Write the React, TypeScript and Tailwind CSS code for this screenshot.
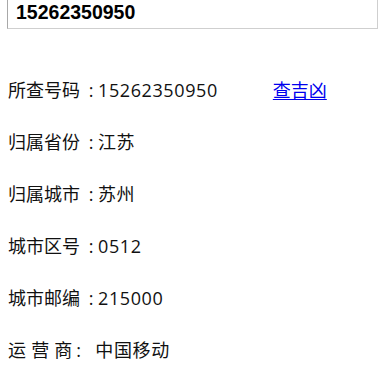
const rows: { label: string; value: string; link?: string; gap?: boolean }[] = [
  { label: "所查号码", value: "15262350950", link: "查吉凶" },
  { label: "归属省份", value: "江苏" },
  { label: "归属城市", value: "苏州" },
  { label: "城市区号", value: "0512" },
  { label: "城市邮编", value: "215000" },
  { label: "运 营 商", value: "中国移动", gap: true },
];

export default function App() {
  return (
    <div className="h-[381px] w-[379px] overflow-hidden bg-white font-['Open_Sans','Noto_Sans_CJK_SC',sans-serif] text-[#111]">
      <div className="ml-[7px] flex h-[29px] w-[371px] items-center border-b border-l border-r border-b-[#cfcfcf] border-l-[#a8a8a8] border-r-[#cfcfcf] pl-[8px]">
        <span className="pb-[3px] font-['Liberation_Sans',Arial,sans-serif] text-[19.5px] font-bold leading-none text-black">
          15262350950
        </span>
      </div>
      <div className="mt-[35px] flex flex-col px-[8px]">
        {rows.map((r) => (
          <div key={r.label} className="flex h-[52px] items-center whitespace-pre text-[18px] leading-none">
            <span className="[word-spacing:0.5px]">{r.label}</span>
            <span className={r.gap ? "w-[23px] pl-[4px] text-left" : "w-[18px] pl-[4px] text-center"}>:</span>
            <span className="tracking-[0.6px]">{r.value}</span>
            {r.link && (
              <a href="#" className="ml-[55px] text-[#0000ee] underline underline-offset-2">
                {r.link}
              </a>
            )}
          </div>
        ))}
      </div>
    </div>
  );
}
